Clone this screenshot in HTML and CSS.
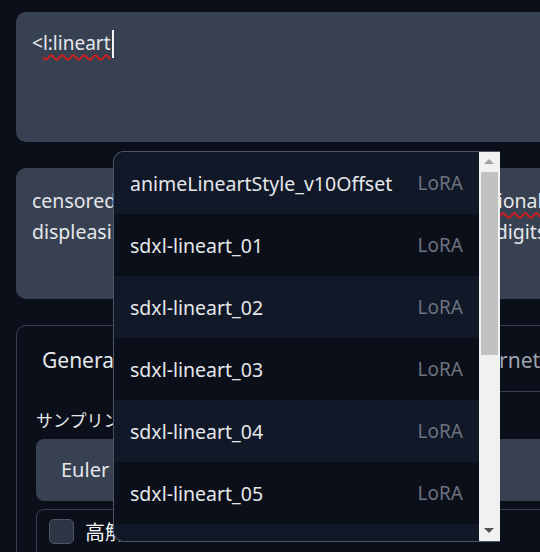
FILE: index.html
```html
<!DOCTYPE html>
<html lang="ja">
<head>
<meta charset="utf-8">
<link rel="stylesheet" href="styles.css">
</head>
<body>
<div class="page">
  <div class="box prompt">
    <div class="line"><span>&lt;</span><span class="typo">l:lineart</span><span class="caret"></span></div>
  </div>
  <div class="box negative">
    <div class="line">censored, worst quality, low quality, bad legs, <span class="typo">additional</span></div>
    <div class="line">displeasing, bad fingers, errors, extra digits, fewer digits, cropped</div>
  </div>
  <div class="panel">
    <div class="tabs">
      <span class="tab active">Generation</span>
      <div class="tabrest">
        <span class="tab second">Textual Inversion</span>
        <span class="tab">Hypernetworks</span>
        <span class="tab">Checkpoints</span>
      </div>
    </div>
    <div class="label">サンプリング方法</div>
    <div class="select">Euler a</div>
    <div class="checkgroup">
      <span class="check"></span>
      <span class="checklabel">高解像度補助</span>
    </div>
  </div>

  <div class="popup">
    <ul class="list">
      <li class="item odd"><span class="name">animeLineartStyle_v10Offset</span><span class="kind">LoRA</span></li>
      <li class="item"><span class="name">sdxl-lineart_01</span><span class="kind">LoRA</span></li>
      <li class="item odd"><span class="name">sdxl-lineart_02</span><span class="kind">LoRA</span></li>
      <li class="item"><span class="name">sdxl-lineart_03</span><span class="kind">LoRA</span></li>
      <li class="item odd"><span class="name">sdxl-lineart_04</span><span class="kind">LoRA</span></li>
      <li class="item"><span class="name">sdxl-lineart_05</span><span class="kind">LoRA</span></li>
      <li class="item odd"><span class="name">sdxl-lineart_06</span><span class="kind">LoRA</span></li>
    </ul>
    <div class="scrollbar">
      <div class="arrow up"></div>
      <div class="track"><div class="thumb"></div></div>
      <div class="arrow down"></div>
    </div>
  </div>
</div>
</body>
</html>
```
FILE: styles.css
```css
* { box-sizing: border-box; }
html, body { margin: 0; padding: 0; }
body {
  background: #0b0f19;
  width: 540px;
  height: 552px;
  overflow: hidden;
  font-family: "Noto Sans", "Noto Sans CJK JP", sans-serif;
  color: #e5e7eb;
}
.page {
  position: relative;
  width: 540px;
  height: 552px;
  overflow: hidden;
  padding: 12px 0 0 16px;
}
.box {
  width: 560px;
  background: #374151;
  border-radius: 10px;
  padding: 14px 16px;
  font-size: 19.5px;
  line-height: 31px;
  white-space: nowrap;
  overflow: hidden;
}
.prompt { height: 130px; padding-top: 16px; font-size: 19px; }
.negative { height: 131px; margin-top: 26px; padding-top: 17px; }
.typo {
  text-decoration: underline wavy #d21c1c;
  text-decoration-skip-ink: none;
  text-underline-offset: 4px;
  text-decoration-thickness: 1.5px;
}
.prompt .line { display: flex; align-items: center; }
.caret {
  display: inline-block;
  width: 2px;
  height: 28px;
  background: #f3f4f6;
  margin-left: 1px;
}

.panel {
  margin-top: 26px;
  width: 560px;
  height: 260px;
  border: 1px solid #374151;
  border-radius: 10px;
  padding: 16px 0 0 19px;
}
.tabs {
  display: flex;
  height: 50px;
  font-size: 21px;
  line-height: 36px;
  white-space: nowrap;
}
.tab { color: #9ca3af; }
.tab.active {
  color: #e5e7eb;
  width: 130px;
  flex: none;
  padding-left: 6px;
}
.tabrest {
  flex: 1;
  display: flex;
  border-bottom: 1px solid #374151;
  gap: 26px;
}
.tab.second { width: 256px; flex: none; }
.label {
  margin-top: 16px;
  font-size: 17px;
  line-height: 26px;
  color: #e5e7eb;
}
.select {
  margin-top: 5px;
  height: 62px;
  background: #374151;
  border-radius: 8px;
  padding-left: 25px;
  font-size: 20px;
  line-height: 62px;
}
.checkgroup {
  margin-top: 8px;
  height: 60px;
  border: 1px solid #374151;
  border-radius: 8px;
  display: flex;
  align-items: center;
  padding: 0 0 16px 12px;
  gap: 11px;
}
.check {
  width: 25px;
  height: 25px;
  background: #2b3544;
  border: 1px solid #4b5563;
  border-radius: 5px;
}
.checklabel { font-size: 20px; color: #f3f4f6; }

.popup {
  position: absolute;
  left: 113px;
  top: 151px;
  width: 387px;
  height: 391px;
  border: 1px solid #4b5563;
  border-right: none;
  border-radius: 11px 0 0 11px;
  overflow: hidden;
  display: flex;
  background: #0b0f19;
}
.list {
  list-style: none;
  margin: 0;
  padding: 0;
  flex: 1;
}
.item {
  height: 62px;
  display: flex;
  align-items: center;
  justify-content: space-between;
  padding: 0 16px;
  background: #0b0f19;
  font-size: 19.5px;
}
.item.odd { background: #111827; }
.name { color: #e5e7eb; }
.kind { color: #6b7280; font-size: 19px; }
.scrollbar {
  width: 21px;
  margin-top: -1px;
  background: #f1f1f1;
  display: flex;
  flex-direction: column;
}
.arrow { height: 21px; position: relative; }
.arrow::after {
  content: "";
  position: absolute;
  left: 5px;
  width: 0; height: 0;
  border-left: 5px solid transparent;
  border-right: 5px solid transparent;
}
.arrow.up::after { top: 8px; border-bottom: 5px solid #a3a3a3; }
.arrow.down::after { top: 8px; border-top: 5px solid #505050; }
.track { flex: 1; padding: 0 2px; }
.thumb { height: 183px; background: #c1c1c1; }
```
